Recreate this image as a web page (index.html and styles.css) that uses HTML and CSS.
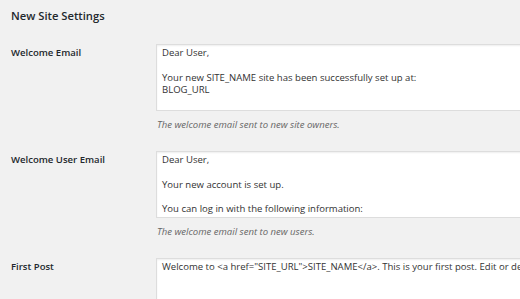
FILE: index.html
```html
<!DOCTYPE html>
<html>
<head>
<meta charset="utf-8">
<link rel="stylesheet" href="styles.css">
</head>
<body>
<div class="wrap">
  <h2 class="title">New Site Settings</h2>
  <div class="form">
    <div class="row">
      <label class="label">Welcome Email</label>
      <div class="field">
        <textarea class="box" readonly>Dear User,

Your new SITE_NAME site has been successfully set up at:
BLOG_URL

You can log in to the administrator account with the following information:</textarea>
        <p class="desc">The welcome email sent to new site owners.</p>
      </div>
    </div>
    <div class="row">
      <label class="label">Welcome User Email</label>
      <div class="field">
        <textarea class="box" readonly>Dear User,

Your new account is set up.

You can log in with the following information:
Username: USERNAME</textarea>
        <p class="desc">The welcome email sent to new users.</p>
      </div>
    </div>
    <div class="row">
      <label class="label">First Post</label>
      <div class="field">
        <textarea class="box" readonly wrap="off">Welcome to &lt;a href="SITE_URL"&gt;SITE_NAME&lt;/a&gt;. This is your first post. Edit or delete it, then start blogging!</textarea>
      </div>
    </div>
  </div>
</div>
</body>
</html>
```
FILE: styles.css
```css
html, body {
  margin: 0;
  padding: 0;
  background: #f1f1f1;
  overflow: hidden;
  height: 299px;
}
body {
  font-family: "Open Sans", "Liberation Sans", sans-serif;
  color: #444;
  font-size: 9.55px;
}
.wrap {
  padding: 9px 0 0 11px;
}
.title {
  margin: 0;
  font-size: 11.2px;
  line-height: 14px;
  font-weight: 600;
  color: #23282d;
}
.form {
  padding-top: 21px;
}
.row {
  display: grid;
  grid-template-columns: 145px 1fr;
  padding-bottom: 20px;
}
.label {
  font-weight: 600;
  color: #23282d;
  line-height: 12.3px;
  padding-top: 3px;
}
.field {
  display: flex;
  flex-direction: column;
}
.box {
  box-sizing: border-box;
  width: 900px;
  height: 67px;
  margin: 0;
  padding: 2px 5px;
  border: 1px solid #ddd;
  background: #fff;
  box-shadow: inset 0 1px 2px rgba(0,0,0,0.07);
  font-family: inherit;
  font-size: 9.55px;
  line-height: 12.3px;
  color: #333;
  resize: none;
  overflow: hidden;
  outline: none;
}
.desc {
  margin: 8px 0 0 1px;
  font-style: italic;
  color: #666;
  line-height: 12px;
}
```
